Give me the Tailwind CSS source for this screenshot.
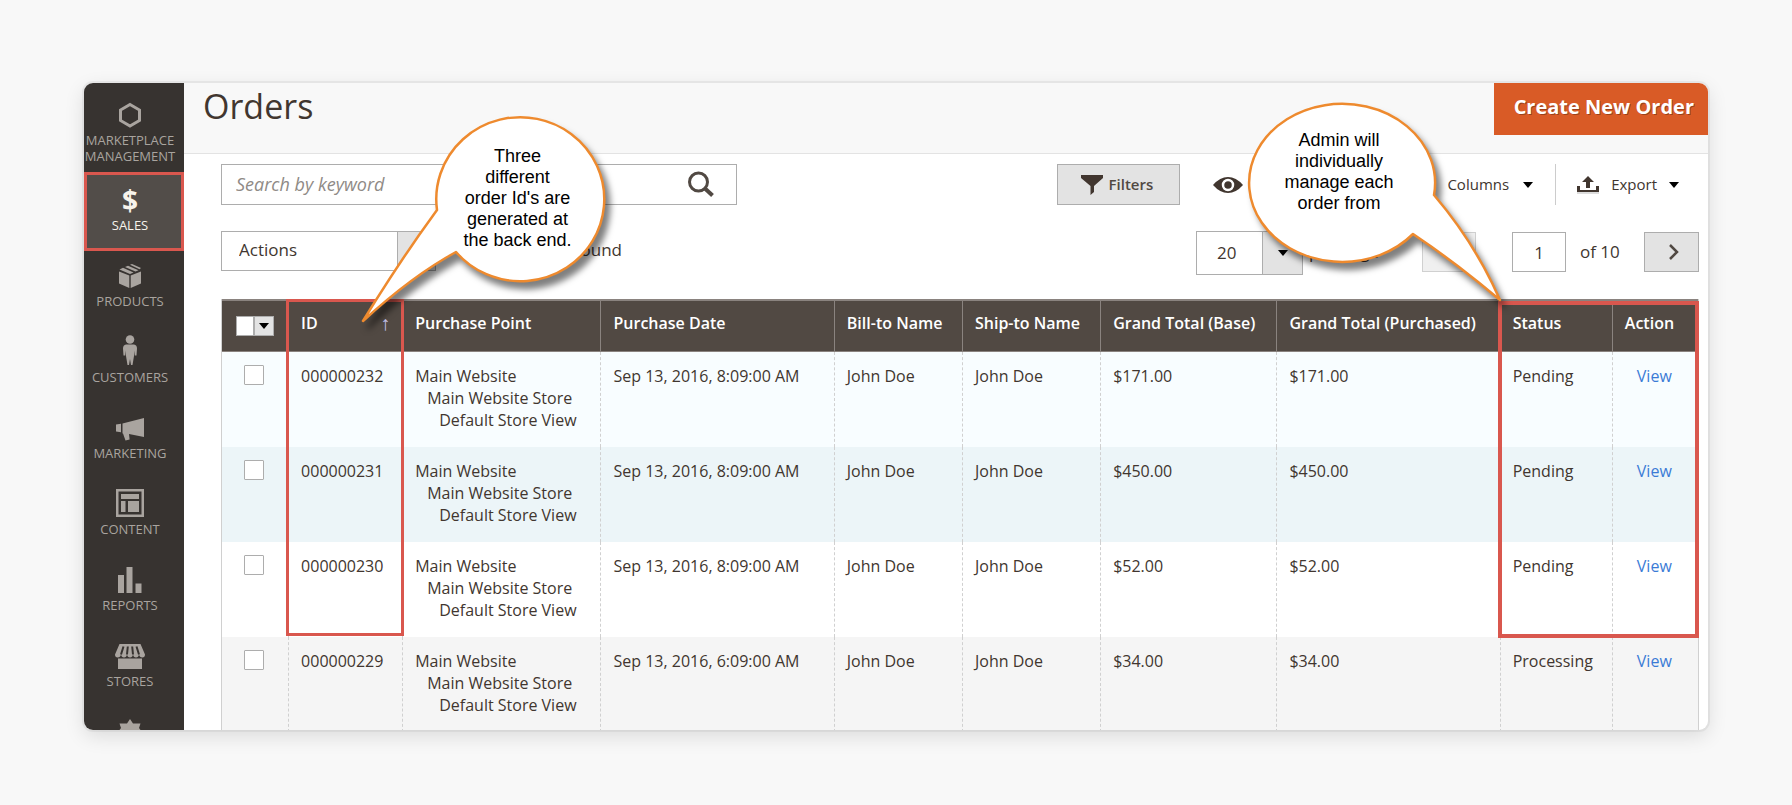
<!DOCTYPE html>
<html lang="en">
<head>
  <meta charset="UTF-8" />
  <meta name="viewport" content="width=device-width, initial-scale=1.0"/>
  <title>Orders</title>
  <!-- Tailwind CSS CDN -->
  <script src="https://cdn.jsdelivr.net/npm/@tailwindcss/browser@4"></script>
</head>
<body class="bg-[#f8f8f8] h-screen flex px-[84px] pt-[83px] pb-[75px] font-['Open_Sans',sans-serif] text-base text-[#41362f]">
  <div class="relative flex-1 flex rounded-[9px] overflow-hidden bg-white shadow-[0_6px_20px_rgba(0,0,0,0.12),0_0_0_2px_#ececec]">

    <!-- Sidebar -->
    <nav class="w-[100px] shrink-0 bg-[#373330] text-[#a9a49f] text-[13px] leading-4 text-center">
      <a href="#" class="flex flex-col items-center gap-1 h-[90px] pt-[19px] pr-2">
        <svg class="w-[26px] h-[26px]" viewBox="0 0 26 26" fill="none" stroke="currentColor" stroke-width="3"><path d="M13 2.500 22.500 8v10.500L13 24 3.500 18.500V8z"/></svg>
        <span>MARKETPLACE MANAGEMENT</span>
      </a>
      <a href="#" class="relative flex flex-col items-center gap-1 h-[76px] pt-[14px] pr-2 bg-[#524d49] text-[#f7f3eb]">
        <span class="h-[26px] leading-[26px] text-[28px] font-bold">$</span>
        <span>SALES</span>
        <span class="absolute -top-px left-0 right-0 h-[79px] border-3 border-[#d9574e]"></span>
      </a>
      <a href="#" class="flex flex-col items-center gap-1 h-[76px] pt-[14px] pr-2">
        <svg class="w-[26px] h-[26px]" viewBox="0 0 26 26" fill="currentColor"><path d="M2 8.500 12.300 12.500V25L2 20.500zM24 8.500 13.700 12.500V25L24 20.500zM2.500 6.500 6 4.800l10.500 4.600L13 11zM8 4l3-1.300 10.500 4.600-3 1.300zM13 1.800l2-.8 9 4-1.500 1.200z"/></svg>
        <span>PRODUCTS</span>
      </a>
      <a href="#" class="flex flex-col items-center gap-1 h-[76px] pt-[14px] pr-2">
        <svg class="w-[30px] h-[30px] -mt-1" viewBox="0 0 30 30" fill="currentColor"><circle cx="15" cy="4.500" r="4.300"/><path d="M11 9.500h8q3 .5 3 4l-.5 7h-1.700v-5l-.8 5.500-1.500 9h-1.500L15 24l-1 6h-1.500L11 21l-.8-5.500v5H8.500L8 13.500q0-3.500 3-4z"/></svg>
        <span>CUSTOMERS</span>
      </a>
      <a href="#" class="flex flex-col items-center gap-1 h-[76px] pt-[14px] pr-2">
        <svg class="w-[28px] h-[26px]" viewBox="0 0 28 26" fill="currentColor"><path d="M6.500 8.500 28 3v19l-15-3 .6 5.500-4.100 1L7 18.500h-.5zM0 9.500l5-.8v8.600l-5-.8z"/></svg>
        <span>MARKETING</span>
      </a>
      <a href="#" class="flex flex-col items-center gap-1 h-[76px] pt-[14px] pr-2">
        <svg class="w-[28px] h-[28px] -mt-0.5" viewBox="0 0 28 28" fill="currentColor"><path fill-rule="evenodd" d="M0 0h28v28H0zM2.500 2.500v23h23v-23z"/><path d="M5 5h18v5H5zM5 12h4.500v11H5zM12 12h11v11H12z"/></svg>
        <span>CONTENT</span>
      </a>
      <a href="#" class="flex flex-col items-center gap-1 h-[76px] pt-[14px] pr-2">
        <svg class="w-[26px] h-[26px]" viewBox="0 0 26 26" fill="currentColor"><path d="M1 8h6v18H1zM9.500 0h6v26h-6zM18.500 16.500h6V26h-6z"/></svg>
        <span>REPORTS</span>
      </a>
      <a href="#" class="flex flex-col items-center gap-1 h-[76px] pt-[14px] pr-2">
        <svg class="w-[30px] h-[26px]" viewBox="0 0 30 26" fill="currentColor"><path d="M4.500 1h21L30 11.500q0 3-2.700 3t-3.300-3q-.5 3-3 3t-3-3q-.5 3-3 3t-3-3q-.5 3-3 3t-3-3q-.6 3-3.300 3T0 11.500z"/><path d="M3 15.500h24V26H3z"/><path stroke="#373330" stroke-width="2" d="M8.500 3.500 6 11.500M12.800 3.500 12 11.500M17.200 3.500 18 11.500M21.500 3.500 24 11.500"/></svg>
        <span>STORES</span>
      </a>
      <a href="#" aria-label="System" class="flex flex-col items-center h-[76px] pt-[14px] pr-2">
        <svg class="w-[26px] h-[26px]" viewBox="0 0 26 26" fill="currentColor"><path d="m13 0 3 4.500h7.500L22 9l3 4-3 4 1 6-6-1-4 4-4-4-6 1 1-6-3-4 3-4-1.500-4.500H10z"/></svg>
      </a>
    </nav>

    <main class="flex-1 min-w-0">
      <header class="h-[71px] flex items-start justify-between bg-[#f8f8f8] border-b border-[#e3e3e3]">
        <h1 class="pl-[19px] text-[34px] leading-[46px]">Orders</h1>
        <button class="h-[52px] pl-5 pr-3.5 pb-1 bg-[#d95b26] text-white text-xl leading-[46px] font-bold [text-shadow:1px_1px_0_rgba(0,0,0,0.3)]">Create New Order</button>
      </header>

      <div class="pl-[37px] pr-[9px] pt-[10px]">
        <!-- Search and grid controls -->
        <div class="flex items-center justify-between h-[41px]">
          <form class="flex items-center w-[516px] h-full border border-[#adadad] pl-3.5 pr-[22px] pb-0.5">
            <input type="search" aria-label="Search by keyword" placeholder="Search by keyword" class="flex-1 min-w-0 text-lg outline-none placeholder:italic placeholder:text-[#8f8a86]" />
            <button type="button" aria-label="Search">
              <svg class="w-[26px] h-[26px]" viewBox="0 0 26 26" fill="none" stroke="#514943" stroke-width="3"><circle cx="10.500" cy="11" r="9"/><path stroke-width="4" d="m17 17.500 7.500 7"/></svg>
            </button>
          </form>
          <div class="flex items-center h-full pr-5 text-[15px]">
            <button class="flex items-center justify-center gap-1.5 w-[123px] h-full pr-1 bg-[#e3e3e3] border border-[#adadad] font-semibold text-[#514943]">
              <svg class="w-[22px] h-[20px]" viewBox="0 0 22 20" fill="#41362f"><path d="M0 0h22v3l-9 8v6l-3.500 3v-9L0 3z"/></svg>
              Filters
            </button>
            <button aria-label="Default View" class="ml-[33px]">
              <svg class="w-[30px] h-[18px]" viewBox="0 0 30 18"><path fill="#41362f" d="M0 9Q7 1 15 1t15 8q-7 8-15 8T0 9z"/><circle cx="15" cy="9" r="5" fill="none" stroke="#fff" stroke-width="2.500"/></svg>
            </button>
            <button class="flex items-center gap-3.5 ml-[204px]">
              Columns
              <svg class="w-[10px] h-[6px]" viewBox="0 0 10 6"><path d="M0 0h10L5 6z"/></svg>
            </button>
            <div class="w-px h-full bg-[#ccc] ml-[22px] mr-[21px]"></div>
            <button class="flex items-center gap-3">
              <svg class="w-[22px] h-[18px]" viewBox="0 0 22 18" fill="#41362f"><path d="M0 10h3v4h16v-4h3v6H0zM11 0l6 6h-4v6H9V6H5z"/><path fill="#ddd" d="M0 16h22v2H0z"/></svg>
              Export
              <svg class="w-[10px] h-[6px]" viewBox="0 0 10 6"><path d="M0 0h10L5 6z"/></svg>
            </button>
          </div>
        </div>

        <!-- Mass actions and paging -->
        <div class="flex items-start justify-between h-[68px] mt-[26px]">
          <div class="flex items-start h-10">
            <div class="flex w-[215px] h-full border border-[#adadad]">
              <select aria-label="Actions" class="appearance-none flex-1 pl-[17px] pb-0.5 text-[17px]">
                <option>Actions</option>
              </select>
              <span class="w-[38px] bg-[#e3e3e3] border-l border-[#adadad]"></span>
            </div>
            <span class="w-[186px] text-right leading-[38px] text-[17px]">found</span>
          </div>
          <div class="flex items-start">
            <div class="flex w-[107px] h-11 border border-[#adadad]">
              <select aria-label="Records per page" class="appearance-none flex-1 pl-5 text-[17px]">
                <option>20</option>
              </select>
              <span class="w-[40px] flex items-center justify-center bg-[#e3e3e3] border-l border-[#adadad]">
                <svg class="w-[10px] h-[6px]" viewBox="0 0 10 6"><path d="M0 0h10L5 6z"/></svg>
              </span>
            </div>
            <span class="w-[119px] pl-1.5 leading-[42px] text-[17px]">per page</span>
            <button disabled aria-label="Previous page" class="w-[54px] h-10 mt-px bg-[#f0f0f0] border border-[#d0d0d0]"></button>
            <input type="text" aria-label="Page" value="1" class="w-[54px] h-10 mt-px ml-9 border border-[#adadad] text-center text-[17px]" />
            <span class="w-[78px] pl-3.5 leading-[42px] text-[17px]">of 10</span>
            <button aria-label="Next page" class="flex items-center justify-center w-[55px] h-10 mt-px pl-1 bg-[#e3e3e3] border border-[#adadad]">
              <svg class="w-[10px] h-[16px]" viewBox="0 0 10 16" fill="none" stroke="#514943" stroke-width="2.500"><path d="m1 1 7 7-7 7"/></svg>
            </button>
          </div>
        </div>

        <div class="relative">
          <table class="w-full table-fixed border-separate border-spacing-0 border-x border-[#d0d0d0] text-left">
            <thead>
              <tr class="h-[53px] bg-[#514943] text-white *:border-t-2 *:border-b *:border-[#8a837f] *:pb-1.5 *:font-semibold">
                <th class="w-[66px] pl-3.5">
                  <div class="flex items-center mt-1.5">
                    <input type="checkbox" aria-label="Select all" class="appearance-none w-[18px] h-5 bg-white border border-[#adadad]" />
                    <button aria-label="Selection options" class="w-5 h-5 flex items-center justify-center bg-[#e3e3e3] border border-[#adadad]">
                      <svg class="w-[10px] h-[6px]" viewBox="0 0 10 6"><path d="M0 0h10L5 6z"/></svg>
                    </button>
                  </div>
                </th>
                <th class="w-[114px] border-l px-3"><span class="flex justify-between">ID <span class="text-xl leading-6 font-normal text-[#c5c3ee]">↑</span></span></th>
                <th class="w-[198px] border-l pl-3">Purchase Point</th>
                <th class="w-[233px] border-l pl-3">Purchase Date</th>
                <th class="w-[128px] border-l pl-3">Bill-to Name</th>
                <th class="w-[138px] border-l pl-3">Ship-to Name</th>
                <th class="w-[176px] border-l pl-3">Grand Total (Base)</th>
                <th class="w-[223px] border-l pl-3">Grand Total (Purchased)</th>
                <th class="w-[112px] border-l pl-3">Status</th>
                <th class="w-[86px] border-l pl-3">Action</th>
              </tr>
            </thead>
            <tbody id="orders"></tbody>
          </table>
          <!-- Highlighted columns -->
          <div class="absolute top-0 left-[65px] w-[118px] h-[337px] border-3 border-[#d9574e] pointer-events-none"></div>
          <div class="absolute top-[2px] right-0 w-[201px] h-[337px] border-4 border-[#d9574e] pointer-events-none"></div>
        </div>
      </div>
    </main>

    <!-- Callouts -->
    <div class="absolute top-[21px] left-[270px] w-[260px] h-[240px] pointer-events-none font-['Liberation_Sans',sans-serif] text-lg leading-[21px] text-black text-center">
      <svg class="absolute inset-0 w-full h-full overflow-visible drop-shadow-[5px_7px_3px_rgba(0,0,0,0.5)]" viewBox="354 105 260 240">
        <path fill="#fff" stroke="#ee8a2e" stroke-width="2.500" stroke-linejoin="round" d="M437 211A84 82 0 1 1 456 253Q412 277 363 322Q399 263 437 211z"/>
      </svg>
      <p class="relative pt-[42px] pl-[67px]">Three<br>different<br>order Id's are<br>generated at<br>the back end.</p>
    </div>
    <div class="absolute top-[13px] right-[198px] w-[270px] h-[220px] pointer-events-none font-['Liberation_Sans',sans-serif] text-lg leading-[21px] text-black text-center">
      <svg class="absolute inset-0 w-full h-full overflow-visible drop-shadow-[5px_7px_3px_rgba(0,0,0,0.5)]" viewBox="1240 96 270 220">
        <path fill="#fff" stroke="#ee8a2e" stroke-width="2.500" stroke-linejoin="round" d="M1434 195A93 79 0 1 0 1413 234Q1455 262 1500 300Q1475 243 1434 195z"/>
      </svg>
      <p class="relative pt-[34px] pr-[72px]">Admin will<br>individually<br>manage each<br>order from</p>
    </div>
  </div>

  <script>
    const orders = [
      { id: "000000232", date: "Sep 13, 2016, 8:09:00 AM", total: "$171.00", status: "Pending", bg: "bg-[#f8fdff]" },
      { id: "000000231", date: "Sep 13, 2016, 8:09:00 AM", total: "$450.00", status: "Pending", bg: "bg-[#ecf5f8]" },
      { id: "000000230", date: "Sep 13, 2016, 8:09:00 AM", total: "$52.00", status: "Pending", bg: "bg-white" },
      { id: "000000229", date: "Sep 13, 2016, 6:09:00 AM", total: "$34.00", status: "Processing", bg: "bg-[#f5f5f5]" },
    ];
    const cell = "border-l border-dashed border-[#d0d0d0] pl-3 pt-[13px]";

    document.getElementById("orders").innerHTML = orders.map((o) => `
      <tr class="h-[95px] align-top leading-[22px] ${o.bg}">
        <td class="pl-[22px] pt-[13px]"><input type="checkbox" aria-label="Select order ${o.id}" class="appearance-none block w-5 h-5 bg-white border border-[#adadad] rounded-[1px]" /></td>
        <td class="${cell}">${o.id}</td>
        <td class="${cell}">Main Website<div class="pl-3">Main Website Store</div><div class="pl-6">Default Store View</div></td>
        <td class="${cell}">${o.date}</td>
        <td class="${cell}">John Doe</td>
        <td class="${cell}">John Doe</td>
        <td class="${cell}">${o.total}</td>
        <td class="${cell}">${o.total}</td>
        <td class="${cell}">${o.status}</td>
        <td class="border-l border-dashed border-[#d0d0d0] pl-6 pt-[13px]"><a href="#" class="text-[#3b7bd6]">View</a></td>
      </tr>`).join("");
  </script>
</body>
</html>
